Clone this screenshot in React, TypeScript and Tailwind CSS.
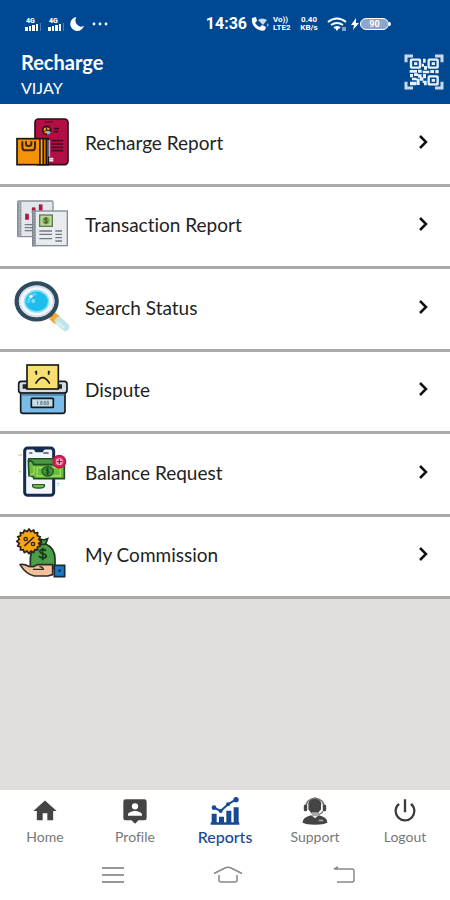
import React from 'react';

interface ReportItem {
  label: string;
  icon: React.FC;
}

interface NavItem {
  label: string;
  icon: React.FC;
  active?: boolean;
}

const PhonePackageIcon: React.FC = () => (
  <svg viewBox="0 0 168 168" className="h-14 w-14 shrink-0" aria-hidden="true">
    <rect x="63" y="9" width="99" height="137" rx="10" fill="#b30f45" stroke="#26101c" strokeWidth="5" />
    <path d="M92 18h26" stroke="#4a0a22" strokeWidth="5" strokeDasharray="5 3" />
    <circle cx="98" cy="43" r="12" fill="#f2a01c" stroke="#26101c" strokeWidth="5" />
    <path d="M98 43l13 5a13 13 0 0 1-11 9z" fill="#7cb4e8" />
    <path d="M98 31v12h12M88 47l10-4" stroke="#26101c" strokeWidth="3" fill="none" />
    <path d="M119 38h16M119 47h14M112 74h36M112 84h36M112 94h36M112 104h36" stroke="#4a0a22" strokeWidth="5" />
    <path d="M99 128h19M104 134h14" stroke="#f7e9ee" strokeWidth="5" />
    <rect x="9" y="68" width="94" height="78" fill="#f59208" stroke="#1d1611" strokeWidth="5" />
    <path d="M78 68v78M88 68v78M97 68v78" stroke="#1d1611" strokeWidth="5" />
    <path d="M82 70v74" stroke="#f7b13c" strokeWidth="3" />
    <path d="M25 76v16q0 11 9 11h20q9 0 9-11V76M36 76v8q0 6 8 6t8-6v-8" fill="none" stroke="#3a2610" strokeWidth="6" />
    <path d="M106 72v50" stroke="#9db3ed" strokeWidth="5" />
  </svg>
);

const LedgerIcon: React.FC = () => (
  <svg viewBox="0 0 168 168" className="h-14 w-14 shrink-0" aria-hidden="true">
    <rect x="11" y="9" width="106" height="107" rx="3" fill="#e3e6ea" stroke="#8b929b" strokeWidth="4" />
    <rect x="12" y="11" width="10" height="103" fill="#9299a2" />
    <path d="M17 13v100" stroke="#c9ced4" strokeWidth="3" strokeDasharray="4 4" />
    <path d="M39 65V48M59 46V30M80 38V20" stroke="#b5123f" strokeWidth="11" />
    <path d="M34 48h10M54 29h10M75 20h10" stroke="#6e7681" strokeWidth="3" />
    <path d="M32 80h25M32 89h25M32 98h25" stroke="#737b85" strokeWidth="4" />
    <rect x="56" y="39" width="104" height="104" fill="#e9ecef" stroke="#858c95" strokeWidth="4" />
    <rect x="54" y="37" width="11" height="108" fill="#7f8790" />
    <path d="M60 41v100" stroke="#b9bfc6" strokeWidth="3" strokeDasharray="4 4" />
    <rect x="77" y="51" width="38" height="34" fill="#b9dd90" stroke="#69745f" strokeWidth="4" />
    <circle cx="96" cy="68" r="11" fill="#80a95e" />
    <path d="M101 63c-3-4-11-3-10 1s10 3 10 7-8 5-11 1M96 58v20" stroke="#42582f" strokeWidth="3" fill="none" />
    <path d="M76 99h38M76 109h38M76 122h38M124 99h20M124 109h20M124 119h20M124 129h20" stroke="#717984" strokeWidth="4" />
  </svg>
);

const MagnifierIcon: React.FC = () => (
  <svg viewBox="0 0 168 168" className="h-14 w-14 shrink-0" aria-hidden="true">
    <path d="M105 96l12 11" stroke="#355166" strokeWidth="8" />
    <path d="M114 104l18 16" stroke="#f6a832" strokeWidth="27" />
    <path d="M134 120l20 18" stroke="#bfe5e7" strokeWidth="24" strokeLinecap="round" />
    <path d="M128 122l22 19" stroke="#d8f2f3" strokeWidth="7" />
    <ellipse cx="68" cy="61" rx="60" ry="54" fill="#f4f7fb" stroke="#2f4b60" strokeWidth="13" />
    <ellipse cx="68" cy="61" rx="51" ry="45" fill="none" stroke="#d5dce3" strokeWidth="5" />
    <ellipse cx="68" cy="61" rx="36" ry="32" fill="#1dbdec" stroke="#8be2fa" strokeWidth="5" />
    <path d="M44 66a25 23 0 0 1 23-27" fill="none" stroke="#5bd5f5" strokeWidth="8" />
    <circle cx="51" cy="46" r="5" fill="#ffffff" />
    <circle cx="58" cy="60" r="6" fill="#7ce0f8" />
  </svg>
);

const ComplaintBoxIcon: React.FC = () => (
  <svg viewBox="0 0 168 168" className="h-14 w-14 shrink-0" aria-hidden="true">
    <rect x="14" y="55" width="145" height="35" rx="8" fill="#d5dce2" stroke="#14191e" strokeWidth="5" />
    <path d="M26 64h118v13H26z" fill="#20262c" />
    <rect x="39" y="6" width="94" height="72" fill="#f8df72" stroke="#1b1b17" strokeWidth="5" />
    <path d="M67 23v12M104 23v12" stroke="#1b1b17" strokeWidth="5" />
    <path d="M62 27h6M103 27h6" stroke="#1b1b17" strokeWidth="3" />
    <path d="M66 60q20-32 40 0" fill="none" stroke="#1b1b17" strokeWidth="5" strokeLinecap="round" />
    <path d="M20 91h133v53q0 7-7 7H27q-7 0-7-7z" fill="#79bce8" stroke="#14191e" strokeWidth="5" />
    <path d="M22 95h129" stroke="#4f83a8" strokeWidth="6" />
    <rect x="52" y="106" width="66" height="27" rx="2" fill="#c6dcea" stroke="#14191e" strokeWidth="5" />
    <path d="M71 113v13M80 115h4v10h-4zM90 115h4v10h-4zM99 115h4v10h-4z" fill="none" stroke="#75838c" strokeWidth="3" />
  </svg>
);

const BalanceIcon: React.FC = () => (
  <svg viewBox="0 0 168 168" className="h-14 w-14 shrink-0" aria-hidden="true">
    <rect x="32" y="6" width="87" height="142" rx="9" fill="#f3f5fa" stroke="#152b53" strokeWidth="9" />
    <path d="M56 6h38l-8 13H65z" fill="#152b53" />
    <path d="M46 21h9M88 21h16" stroke="#46546b" strokeWidth="4" />
    <path d="M125 31l8 3M130 112h6M131 118h4" stroke="#83d6df" strokeWidth="4" />
    <path d="M13 27h12M14 77h8" stroke="#efc99a" strokeWidth="4" />
    <rect x="44" y="38" width="75" height="20" fill="#4a9742" stroke="#1d4d29" strokeWidth="4" />
    <path d="M43 44q14 0 16 12h92v42H60q0-7-15-9z" fill="#68bf3d" stroke="#204d25" strokeWidth="5" />
    <path d="M60 60v20q-4 7-12 8M69 65h70v25H69z" fill="none" stroke="#a5da5c" strokeWidth="4" />
    <ellipse cx="101" cy="76" rx="17" ry="14" fill="#42953b" stroke="#235527" strokeWidth="4" />
    <path d="M106 71c-3-4-11-3-10 1s10 3 10 7-8 5-11 1M101 65v22" stroke="#173f20" strokeWidth="3" fill="none" />
    <circle cx="136" cy="47" r="18" fill="#df285e" stroke="#c01a50" strokeWidth="6" />
    <circle cx="136" cy="47" r="10" fill="#f8b4c6" />
    <path d="M128 47h16M136 39v16" stroke="#9e174a" strokeWidth="4" />
    <path d="M56 116h35v6q-3 4-12 4H68q-9 0-12-4z" fill="#80c44d" stroke="#2b6130" strokeWidth="4" />
  </svg>
);

// points of the scalloped percent badge, outer and inner radius in turn
const badgePoints = Array.from({ length: 32 }, (_, i) => {
  const radius = i % 2 === 0 ? 37 : 30;
  const angle = (i * Math.PI) / 16;
  return `${Math.round(45 + radius * Math.cos(angle))},${Math.round(40 + radius * Math.sin(angle))}`;
}).join(' ');

const CommissionIcon: React.FC = () => (
  <svg viewBox="0 0 168 168" className="h-14 w-14 shrink-0" aria-hidden="true">
    <path d="M82 44l-3-11 10 3 12-4-6 16q28 12 28 45v28H49V93q0-31 27-44z" fill="#4a9f47" stroke="#1b3420" strokeWidth="5" />
    <path d="M75 49h22" stroke="#1b3420" strokeWidth="5" />
    <path d="M96 69c-5-8-21-5-18 3s19 4 19 12-17 8-22 0M86 59v38" fill="none" stroke="#17351d" strokeWidth="5" />
    <polygon points={badgePoints} fill="#f8a414" stroke="#2a2118" strokeWidth="5" strokeLinejoin="round" />
    <circle cx="35" cy="33" r="5" fill="none" stroke="#2a2118" strokeWidth="4" />
    <circle cx="57" cy="48" r="5" fill="none" stroke="#2a2118" strokeWidth="4" />
    <path d="M60 27L31 54" stroke="#2a2118" strokeWidth="5" />
    <path d="M18 110q12-3 26 5l14 1 12-6h46v30l-15 4H61q-24-4-43-34z" fill="#f2c29c" stroke="#332a27" strokeWidth="5" strokeLinejoin="round" />
    <path d="M57 124h31q0-7-12-8" fill="none" stroke="#332a27" strokeWidth="4" />
    <rect x="121" y="112" width="31" height="34" fill="#1b79bf" stroke="#132c43" strokeWidth="5" />
    <circle cx="137" cy="128" r="4" fill="#132c43" />
  </svg>
);

const HomeIcon: React.FC = () => (
  <svg viewBox="0 0 24 24" className="h-7 w-7" fill="#444444" aria-hidden="true">
    <path d="M10 20v-6h4v6h5v-8h3L12 3 2 12h3v8z" />
  </svg>
);

const ProfileIcon: React.FC = () => (
  <svg viewBox="0 0 24 24" className="h-7 w-7" fill="#444444" aria-hidden="true">
    <path d="M20 2H4a2 2 0 0 0-2 2v14c0 1.100.900 2 2 2h5l3 3 3-3h5a2 2 0 0 0 2-2V4a2 2 0 0 0-2-2zm-8 3.300a2.700 2.700 0 1 1 0 5.400 2.700 2.700 0 0 1 0-5.400zM18 16H6v-.900c0-2 4-3.100 6-3.100s6 1.100 6 3.100z" />
  </svg>
);

const ReportsIcon: React.FC = () => (
  <svg viewBox="0 0 90 84" className="h-7 w-[30px]" fill="#174a93" aria-hidden="true">
    <path d="M2 76h86v7H2zM5 50h15v26H5zM27 59h15v17H27zM49 41h15v35H49zM71 31h15v45H71z" />
    <path d="M12 32l20 10 22-20 21-13" fill="none" stroke="#174a93" strokeWidth="6" />
    <circle cx="12" cy="32" r="7" />
    <circle cx="32" cy="42" r="6" />
    <circle cx="54" cy="22" r="6" />
    <circle cx="78" cy="8" r="8" />
  </svg>
);

const SupportIcon: React.FC = () => (
  <svg viewBox="0 0 84 90" className="h-7 w-7" fill="#444444" aria-hidden="true">
    <path d="M21 20q3-14 20-16 18 2 21 16l-1 19-10 14H31L21 40z" />
    <path d="M14 28q0-20 28-25 28 5 28 25" fill="none" stroke="#777777" strokeWidth="5" />
    <rect x="6" y="24" width="11" height="22" rx="5" />
    <rect x="67" y="24" width="11" height="22" rx="5" />
    <path d="M68 45q-5 11-18 11" fill="none" stroke="#777777" strokeWidth="4" />
    <path d="M32 49h19v13H32z" fill="#aaaaaa" />
    <path d="M2 83q0-18 28-24l12 9 12-9q28 6 28 24-12 6-40 6T2 83z" />
    <path d="M54 73h14v5H54z" fill="#aaaaaa" />
  </svg>
);

const PowerIcon: React.FC = () => (
  <svg viewBox="0 0 24 24" className="h-7 w-7" fill="#3c3c3c" aria-hidden="true">
    <path d="M13 2h-2v11h2V2zm4.830 3.170l-1.420 1.420A6.920 6.920 0 0 1 19 12a7 7 0 1 1-11.420-5.420L6.170 5.170A8.930 8.930 0 0 0 3 12a9 9 0 1 0 18 0c0-2.740-1.230-5.180-3.170-6.830z" />
  </svg>
);

const SignalIcon: React.FC = () => (
  <svg viewBox="0 0 19 15" className="h-[15px] w-[19px]" fill="#ffffff" aria-hidden="true">
    <text x="2" y="6" fontFamily="Roboto, sans-serif" fontSize="7" fontWeight="900">4G</text>
    <path d="M1 10h3v4H1zM5 9h2v5H5zM8 8h3v6H8zM12 7h2v7h-2z" />
    <path d="M16 6h1v8h-1z" opacity="0.300" />
  </svg>
);

const QrIcon: React.FC = () => (
  <svg viewBox="0 0 120 108" className="h-9 w-10" aria-hidden="true">
    <path d="M6 25V6h21M93 6h21v19M6 83v19h21M93 102h21V83" fill="none" stroke="#cbd9ec" strokeWidth="9" />
    <g fill="none" stroke="#eaf1f9" strokeWidth="7">
      <rect x="21" y="17" width="27" height="24" rx="2" />
      <rect x="74" y="17" width="27" height="24" rx="2" />
      <rect x="74" y="67" width="27" height="24" rx="2" />
    </g>
    <g fill="#eaf1f9">
      <path d="M30 25h10v8H30zM83 25h10v8H83zM83 75h10v8H83z" />
      <path d="M57 14h8v12h-8zM53 29h7v9h-7zM60 36h9v11h-9zM17 48h22v8H17zM42 47h11v9H42zM56 50h20v8H56zM79 48h11v9H79zM94 48h10v10H94z" />
      <path d="M18 60h9v10h-9zM30 58h12v8H30zM24 71h14v8H24zM42 61h11v10H42zM57 60h9v13h-9zM18 83h19v11H18zM38 74h9v19h-9zM48 70h10v10H48zM56 80h12v7H56zM60 86h8v8h-8z" />
    </g>
  </svg>
);

const StatusBar: React.FC = () => (
  <div className="flex h-12 items-center justify-between pr-[59px] pl-6 font-[Roboto,sans-serif]">
    <div className="flex items-center gap-1">
      <SignalIcon />
      <SignalIcon />
      <svg viewBox="0 0 24 24" className="h-[14px] w-[14px]" fill="#ffffff" aria-hidden="true">
        <path d="M11 0a12 12 0 1 0 13 15Q17 19 12 13T11 0z" />
      </svg>
      <svg viewBox="0 0 16 4" className="ml-1 h-1 w-4" fill="#ffffff" aria-hidden="true">
        <circle cx="2" cy="2" r="1.400" />
        <circle cx="8" cy="2" r="1.400" />
        <circle cx="14" cy="2" r="1.400" />
      </svg>
    </div>
    <div className="flex items-center gap-1">
      <span className="text-base leading-4 font-bold">14:36</span>
      <svg viewBox="0 0 18 14" className="h-[14px] w-[18px]" fill="#ffffff" aria-hidden="true">
        <path d="M1 1l4-1 1 4-2 2q2 3 5 4l2-2 4 2-1 3q-3 2-8-1Q0 8 1 1z" />
        <path d="M7 3q4-3 9 0l-4 5z" opacity="0.800" />
        <path d="M16 6l2 2-2 2z" opacity="0.600" />
      </svg>
      <span className="flex w-[22px] flex-col text-[8px] leading-2 font-bold">
        <span>Vo))</span>
        <span>LTE2</span>
      </span>
      <span className="flex w-5 flex-col items-center text-[8px] leading-2 font-bold">
        <span>0.40</span>
        <span>KB/s</span>
      </span>
      <svg viewBox="0 0 20 14" className="ml-1 h-[14px] w-5" fill="none" stroke="#ffffff" strokeWidth="2" aria-hidden="true">
        <path d="M1 5q9-7 18 0M4 8q6-4 12 0M7 11q3-2 6 0" />
        <path d="M8 11h4l-2 3z" fill="#ffffff" stroke="none" />
        <path d="M16 10v4M18 10v4" strokeWidth="1" />
      </svg>
      <span className="flex items-center">
        <svg viewBox="0 0 8 12" className="h-3 w-2" fill="#ffffff" aria-hidden="true">
          <path d="M5 0L0 7h3l-1 5 6-7H5z" />
        </svg>
        <span className="ml-px flex h-3 w-[29px] items-center justify-center rounded-full border border-white bg-[#8ba7cc] text-[9px] leading-3 font-bold">90</span>
        <span className="h-1 w-0.5 rounded-r bg-white" />
      </span>
    </div>
  </div>
);

const reports: ReportItem[] = [
  { label: 'Recharge Report', icon: PhonePackageIcon },
  { label: 'Transaction Report', icon: LedgerIcon },
  { label: 'Search Status', icon: MagnifierIcon },
  { label: 'Dispute', icon: ComplaintBoxIcon },
  { label: 'Balance Request', icon: BalanceIcon },
  { label: 'My Commission', icon: CommissionIcon },
];

const navItems: NavItem[] = [
  { label: 'Home', icon: HomeIcon },
  { label: 'Profile', icon: ProfileIcon },
  { label: 'Reports', icon: ReportsIcon, active: true },
  { label: 'Support', icon: SupportIcon },
  { label: 'Logout', icon: PowerIcon },
];

const ReportRow: React.FC<{ item: ReportItem }> = ({ item }) => {
  const IconComponent = item.icon;

  return (
    <li className="flex border-b-3 border-[#aaaaaa] bg-white">
      <button type="button" className="flex w-full items-center pr-[17px] pl-[14px] text-left">
        <IconComponent />
        <span className="mb-0.5 ml-[15px] flex-1 text-[19px] leading-6 text-[#222222]">{item.label}</span>
        <svg viewBox="0 0 20 20" className="mb-1 h-5 w-5" fill="none" stroke="#111111" strokeWidth="2.500" aria-hidden="true">
          <path d="M7 4l6 6-6 6" />
        </svg>
      </button>
    </li>
  );
};

const App: React.FC = () => {
  return (
    <div className="flex min-h-screen flex-col bg-[#e0dfde] font-[Lato,sans-serif] [font-variant-ligatures:none]">
      <header className="bg-[#004892] text-white">
        <StatusBar />
        <div className="flex h-14 items-start justify-between pr-[6px] pl-[21px]">
          <div>
            <h1 className="text-xl leading-7 font-bold">Recharge</h1>
            <p className="text-base leading-6">VIJAY</p>
          </div>
          <button type="button" aria-label="Scan QR code" className="mt-[6px]">
            <QrIcon />
          </button>
        </div>
      </header>

      <main className="flex-1">
        <ul className="grid min-h-[495px] auto-rows-fr">
          {reports.map((item) => (
            <ReportRow key={item.label} item={item} />
          ))}
        </ul>
      </main>

      <footer className="bg-white">
        <nav className="grid grid-cols-5 pt-[7px]" aria-label="Main">
          {navItems.map(({ label, icon: IconComponent, active }) => (
            <button
              key={label}
              type="button"
              className="flex flex-col items-center"
              aria-current={active ? 'page' : undefined}
            >
              <IconComponent />
              <span className={active ? 'text-base leading-6 font-medium text-[#174a93]' : 'text-sm leading-6 text-[#777777]'}>
                {label}
              </span>
            </button>
          ))}
        </nav>

        {/* system navigation keys */}
        <div className="flex h-[51px] items-center justify-between pr-[94px] pb-px pl-[102px]">
          <button type="button" aria-label="Recent apps">
            <svg viewBox="0 0 22 18" className="h-[18px] w-[22px]" fill="none" stroke="#999999" strokeWidth="2" aria-hidden="true">
              <path d="M0 3h22M0 10h22M0 17h22" />
            </svg>
          </button>
          <button type="button" aria-label="Home screen">
            <svg viewBox="0 0 30 18" className="h-[18px] w-[30px]" fill="none" stroke="#888888" strokeWidth="1.500" aria-hidden="true">
              <path d="M1 8.500L12 3q3-1.500 6 0l11 5.500M6 10v5q0 2 2 2h14q2 0 2-2v-5" />
            </svg>
          </button>
          <button type="button" aria-label="Back">
            <svg viewBox="0 0 24 18" className="h-[18px] w-6" fill="none" stroke="#888888" strokeWidth="1.500" aria-hidden="true">
              <path d="M6 2L2 4h18q2 0 2 2v9q0 2-2 2H5" />
            </svg>
          </button>
        </div>
      </footer>
    </div>
  );
};

export default App;
